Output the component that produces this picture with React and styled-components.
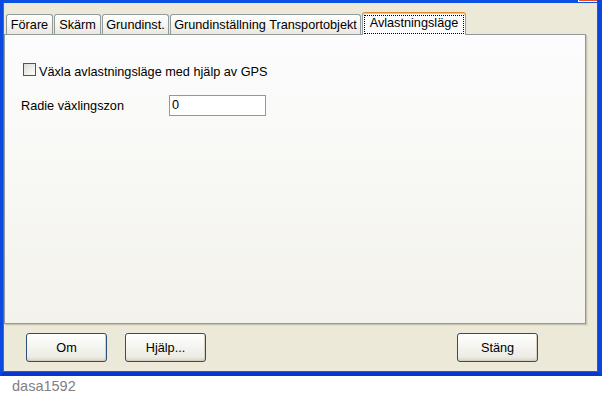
import React from 'react'
import styled, { createGlobalStyle } from 'styled-components'

const GlobalStyle = createGlobalStyle`
  html, body {
    margin: 0;
    padding: 0;
    background: #ffffff;
  }
  body {
    font-family: 'Liberation Sans', Arial, sans-serif;
    font-size: 12.7px;
    color: #000;
  }
`

const tabs = [
  { label: 'Förare', width: 47 },
  { label: 'Skärm', width: 47 },
  { label: 'Grundinst.', width: 67 },
  { label: 'Grundinställning Transportobjekt', width: 191 },
  { label: 'Avlastningsläge', width: 104, active: true },
]

const App = () => (
  <>
    <GlobalStyle />
    <Window>
      <TitleEdge>
        <CloseEdge />
      </TitleEdge>
      <Body>
        <TabStrip>
          {tabs.map(t =>
            t.active ? (
              <ActiveTab key={t.label} $width={t.width}>
                <FocusLabel>{t.label}</FocusLabel>
              </ActiveTab>
            ) : (
              <Tab key={t.label} $width={t.width}>
                {t.label}
              </Tab>
            )
          )}
        </TabStrip>
        <Panel>
          <CheckRow>
            <CheckBox />
            <span>Växla avlastningsläge med hjälp av GPS</span>
          </CheckRow>
          <FieldRow>
            <FieldLabel>Radie växlingszon</FieldLabel>
            <TextInput>0</TextInput>
          </FieldRow>
        </Panel>
        <ButtonRow>
          <Button>Om</Button>
          <Button>Hjälp...</Button>
          <Spacer />
          <Button>Stäng</Button>
        </ButtonRow>
      </Body>
    </Window>
    <Caption>dasa1592</Caption>
  </>
)

export default App

const Window = styled.div`
  width: 602px;
  height: 376px;
  box-sizing: border-box;
  display: flex;
  flex-direction: column;
  background: #ece9d8;
  border-left: 3px solid #0a4ae0;
  border-right: 4px solid #0a46dc;
  border-bottom: 4px solid #0836cf;
  box-shadow: inset 1px 0 0 #2a6cf0, inset -1px 0 0 #1d5ae8, inset 0 -1px 0 #1d5ae8;
`

const TitleEdge = styled.div`
  height: 3px;
  background: #0a50e2;
  display: flex;
  justify-content: flex-end;
  padding-right: 1px;
`

const CloseEdge = styled.div`
  width: 18px;
  height: 1px;
  background: #e0502c;
  border-left: 1px solid #ffffff;
  border-bottom: 1px solid #ffffff;
`

const Body = styled.div`
  flex: 1;
  display: flex;
  flex-direction: column;
  padding: 9px 12px 10px 1px;
`

const TabStrip = styled.div`
  display: flex;
  align-items: flex-end;
  gap: 1px;
  padding-left: 2px;
  height: 22px;
  position: relative;
  z-index: 1;
`

const Tab = styled.div`
  box-sizing: border-box;
  width: ${p => p.$width}px;
  height: 20px;
  padding-top: 3px;
  line-height: 14px;
  text-align: center;
  white-space: nowrap;
  border: 1px solid #919b9c;
  border-bottom: none;
  border-radius: 3px 3px 0 0;
  background: linear-gradient(180deg, #ffffff 0%, #f6f5f0 50%, #eae8df 100%);
`

const ActiveTab = styled.div`
  box-sizing: border-box;
  width: ${p => p.$width}px;
  height: 23px;
  margin-bottom: -1px;
  padding: 2px 1px 0 1px;
  border: 1px solid #919b9c;
  border-top: 1px solid #e68b2c;
  border-bottom: none;
  border-radius: 3px 3px 0 0;
  background: #fcfcfe;
  box-shadow: inset 0 1px 0 #ffc73c;
`

const FocusLabel = styled.div`
  height: 19px;
  box-sizing: border-box;
  border: 1px dotted #000;
  line-height: 14px;
  padding-bottom: 3px;
  text-align: center;
  white-space: nowrap;
`

const Panel = styled.div`
  flex: 1;
  display: flex;
  flex-direction: column;
  gap: 16px;
  padding: 28px 0 0 16px;
  border: 1px solid #919b9c;
  background: linear-gradient(180deg, #fcfcfe 0%, #f9f9f6 40%, #f3f2ec 100%);
  box-shadow: 1px 1px 0 #c7c5b2, 2px 2px 0 #dfdccb;
`

const CheckRow = styled.div`
  display: flex;
  align-items: baseline;
  gap: 3px;
  margin-left: 2px;
  line-height: 14px;
  white-space: nowrap;
`

const CheckBox = styled.div`
  width: 13px;
  height: 13px;
  box-sizing: border-box;
  border: 1px solid #2a5e8c;
  background: linear-gradient(135deg, #dcdcd7 0%, #f0f0ec 60%, #ffffff 100%);
`

const FieldRow = styled.div`
  display: flex;
  align-items: center;
  line-height: 14px;
`

const FieldLabel = styled.div`
  width: 148px;
  white-space: nowrap;
`

const TextInput = styled.div`
  box-sizing: border-box;
  width: 97px;
  height: 21px;
  padding-left: 2px;
  line-height: 19px;
  border: 1px solid #7f9db9;
  background: #ffffff;
`

const ButtonRow = styled.div`
  display: flex;
  gap: 18px;
  margin-top: 9px;
  padding: 0 48px 0 22px;
`

const Spacer = styled.div`
  flex: 1;
`

const Button = styled.div`
  box-sizing: border-box;
  width: 81px;
  height: 29px;
  display: flex;
  align-items: center;
  justify-content: center;
  border: 1px solid #2b4f74;
  border-radius: 3px;
  background: linear-gradient(180deg, #ffffff 0%, #f5f5f1 45%, #ecebe4 85%, #d8d4c8 100%);
  box-shadow: inset -1px -1px 0 #d6d0c2;
`

const Caption = styled.div`
  padding: 2px 0 0 12px;
  font-size: 14.5px;
  line-height: 17px;
  color: #808080;
`
